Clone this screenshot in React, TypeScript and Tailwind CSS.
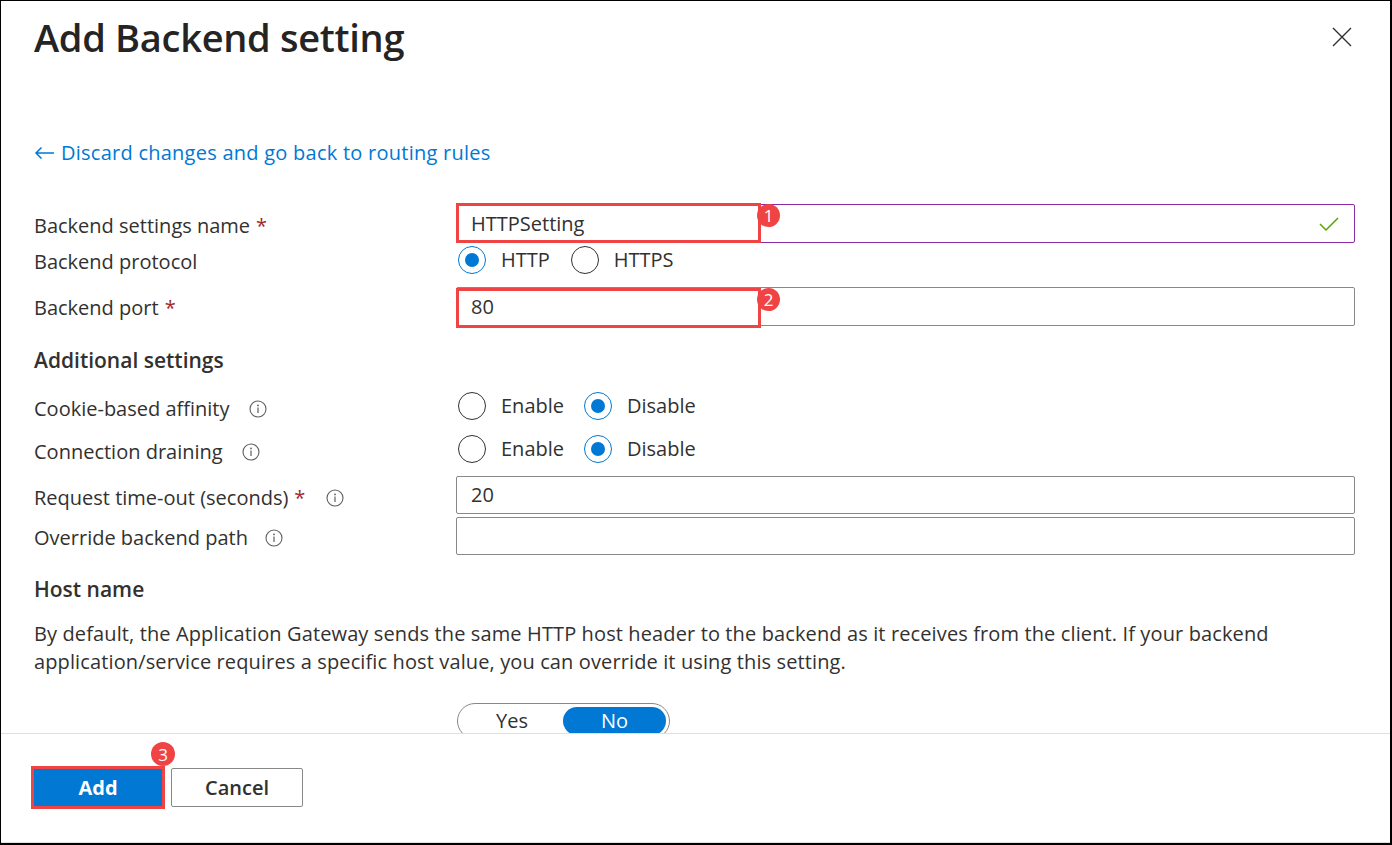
import React, { useState } from "react";

const InfoIcon = () => (
  <svg width="18" height="18" viewBox="0 0 18 18" className="shrink-0">
    <circle cx="9" cy="9" r="8" fill="none" stroke="#605e5c" strokeWidth="1.1" />
    <circle cx="9" cy="5.4" r="0.9" fill="#605e5c" />
    <line x1="9" y1="7.6" x2="9" y2="13" stroke="#605e5c" strokeWidth="1.2" />
  </svg>
);

const Radio = ({ checked, label, onClick }: { checked: boolean; label: string; onClick?: () => void }) => (
  <button type="button" onClick={onClick} className="flex items-center gap-[15px] cursor-pointer">
    <span
      className={`w-[28px] h-[28px] rounded-full border flex items-center justify-center ${
        checked ? "border-[#0078d4]" : "border-[#323130]"
      }`}
    >
      {checked && <span className="w-[14px] h-[14px] rounded-full bg-[#0078d4]" />}
    </span>
    <span className="text-[20px] text-[#323130]">{label}</span>
  </button>
);

const Badge = ({ n, className }: { n: number; className: string }) => (
  <span
    className={`absolute w-[23px] h-[23px] rounded-full bg-[#f04444] text-white text-[17px] leading-none flex items-center justify-center ${className}`}
  >
    {n}
  </span>
);

const Req = () => <span className="text-[#a4262c] ml-[6px]">*</span>;

const App = () => {
  const [protocol, setProtocol] = useState("HTTP");
  const [affinity, setAffinity] = useState("Disable");
  const [draining, setDraining] = useState("Disable");
  const [override, setOverride] = useState(false);

  return (
    <div
      className="w-[1392px] h-[845px] bg-white border-l border-t border-r-2 border-b-2 border-black flex flex-col overflow-hidden text-[#323130]"
      style={{ fontFamily: '"Open Sans", "Noto Sans", sans-serif' }}
    >
      {/* Scrolling body */}
      <div className="h-[732px] shrink-0 overflow-hidden pl-[33px] pr-[35px] relative">
        <div className="h-[72px] flex items-center justify-between">
          <h1 className="text-[38px] font-semibold tracking-[-0.3px] text-[#252423]">Add Backend setting</h1>
          <button className="mr-[-3px] w-[32px] h-[32px] flex items-center justify-center">
            <svg width="20" height="20" viewBox="0 0 20 20">
              <path d="M1 1 L19 19 M19 1 L1 19" stroke="#323130" strokeWidth="1.4" />
            </svg>
          </button>
        </div>

        <div className="mt-[65px] h-[30px] flex items-center gap-[6px] text-[#0078d4] text-[20px] tracking-[0.25px]">
          <svg width="21" height="14" viewBox="0 0 21 14">
            <path d="M20 7 H2 M7.5 1.5 L2 7 L7.5 12.5" stroke="#0078d4" strokeWidth="1.5" fill="none" />
          </svg>
          <span>Discard changes and go back to routing rules</span>
        </div>

        {/* Backend settings name */}
        <div className="mt-[36px] grid grid-cols-[422px_1fr] items-center h-[39px]">
          <div className="text-[20px] pt-[4px]">
            Backend settings name<Req />
          </div>
          <div className="relative h-[39px] border border-[#8a2da5] rounded-[2px] flex items-center px-[14px]">
            <span className="text-[20px]">HTTPSetting</span>
            <svg width="20" height="16" viewBox="0 0 20 16" className="ml-auto mr-[1px]">
              <path d="M1 8 L7 14 L19 2" stroke="#57a300" strokeWidth="1.5" fill="none" />
            </svg>
            <span className="absolute left-[-1px] top-[-2px] w-[305px] h-[40px] border-[3px] border-[#f04444]" />
            <Badge n={1} className="left-[300px] top-[-1px]" />
          </div>
        </div>

        {/* Backend protocol */}
        <div className="grid grid-cols-[422px_1fr] items-center h-[34px]">
          <div className="text-[20px] pt-[4px]">Backend protocol</div>
          <div className="flex items-center gap-[21px] pl-[2px]">
            <Radio checked={protocol === "HTTP"} label="HTTP" onClick={() => setProtocol("HTTP")} />
            <Radio checked={protocol === "HTTPS"} label="HTTPS" onClick={() => setProtocol("HTTPS")} />
          </div>
        </div>

        {/* Backend port */}
        <div className="mt-[10px] grid grid-cols-[422px_1fr] items-center h-[39px]">
          <div className="text-[20px] pt-[2px]">
            Backend port<Req />
          </div>
          <div className="relative h-[39px] border border-[#8a8886] rounded-[2px] flex items-center px-[14px]">
            <span className="text-[20px]">80</span>
            <span className="absolute left-[-1px] top-[0px] w-[305px] h-[40px] border-[3px] border-[#f04444]" />
            <Badge n={2} className="left-[300px] top-[0px]" />
          </div>
        </div>

        <div className="mt-[18px] h-[34px] flex items-center text-[21px] font-semibold">Additional settings</div>

        <div className="mt-[9px] grid grid-cols-[422px_1fr] items-center h-[34px]">
          <div className="text-[20px] flex items-center gap-[19px] pt-[7px]">
            Cookie-based affinity <InfoIcon />
          </div>
          <div className="flex items-center gap-[20px] pl-[2px]">
            <Radio checked={affinity === "Enable"} label="Enable" onClick={() => setAffinity("Enable")} />
            <Radio checked={affinity === "Disable"} label="Disable" onClick={() => setAffinity("Disable")} />
          </div>
        </div>

        <div className="mt-[9px] grid grid-cols-[422px_1fr] items-center h-[34px]">
          <div className="text-[20px] flex items-center gap-[19px] pt-[7px]">
            Connection draining <InfoIcon />
          </div>
          <div className="flex items-center gap-[20px] pl-[2px]">
            <Radio checked={draining === "Enable"} label="Enable" onClick={() => setDraining("Enable")} />
            <Radio checked={draining === "Disable"} label="Disable" onClick={() => setDraining("Disable")} />
          </div>
        </div>

        <div className="mt-[12px] grid grid-cols-[422px_1fr] items-center h-[38px]">
          <div className="text-[20px] flex items-center pt-[6px]">
            Request time-out (seconds)<Req />
            <span className="ml-[21px] flex">
              <InfoIcon />
            </span>
          </div>
          <div className="h-[38px] border border-[#8a8886] rounded-[2px] flex items-center px-[14px]">
            <span className="text-[20px]">20</span>
          </div>
        </div>

        <div className="mt-[3px] grid grid-cols-[422px_1fr] items-center h-[38px]">
          <div className="text-[20px] flex items-center gap-[17px] pt-[4px]">
            Override backend path <InfoIcon />
          </div>
          <div className="h-[38px] border border-[#8a8886] rounded-[2px]" />
        </div>

        <div className="mt-[17px] h-[34px] flex items-center text-[21px] font-semibold pt-[2px]">Host name</div>

        <p className="mt-[14px] text-[20px] leading-[28px] tracking-[0.12px]">
          By default, the Application Gateway sends the same HTTP host header to the backend as it receives from the client. If your backend
          <br />
          application/service requires a specific host value, you can override it using this setting.
        </p>

        <div className="mt-[27px] ml-[423px] w-[213px] h-[36px] rounded-full border border-[#8a8886] flex items-center p-[3px]">
          <button
            onClick={() => setOverride(true)}
            className={`flex-1 h-full rounded-full text-[20px] leading-none ${override ? "bg-[#0078d4] text-white" : "text-[#323130]"}`}
          >
            Yes
          </button>
          <button
            onClick={() => setOverride(false)}
            className={`w-[103px] h-full rounded-full text-[20px] leading-none ${!override ? "bg-[#0078d4] text-white" : "text-[#323130]"}`}
          >
            No
          </button>
        </div>
      </div>

      {/* Footer */}
      <div className="flex-1 border-t border-[#e1dfdd] border-b border-b-[#e1dfdd] flex items-start pl-[30px] pt-[32px] gap-[6px] relative">
        <div className="relative">
          <button className="w-[134px] h-[43px] border-[3px] border-[#f04444] bg-[#0078d4] text-white text-[20px] font-bold">
            Add
          </button>
          <Badge n={3} className="left-[120px] top-[-24px] w-[24px] h-[24px]" />
        </div>
        <button className="mt-[2px] w-[132px] h-[39px] border border-[#8a8886] rounded-[2px] text-[20px] font-semibold text-[#323130]">
          Cancel
        </button>
      </div>
    </div>
  );
};

export default App;
